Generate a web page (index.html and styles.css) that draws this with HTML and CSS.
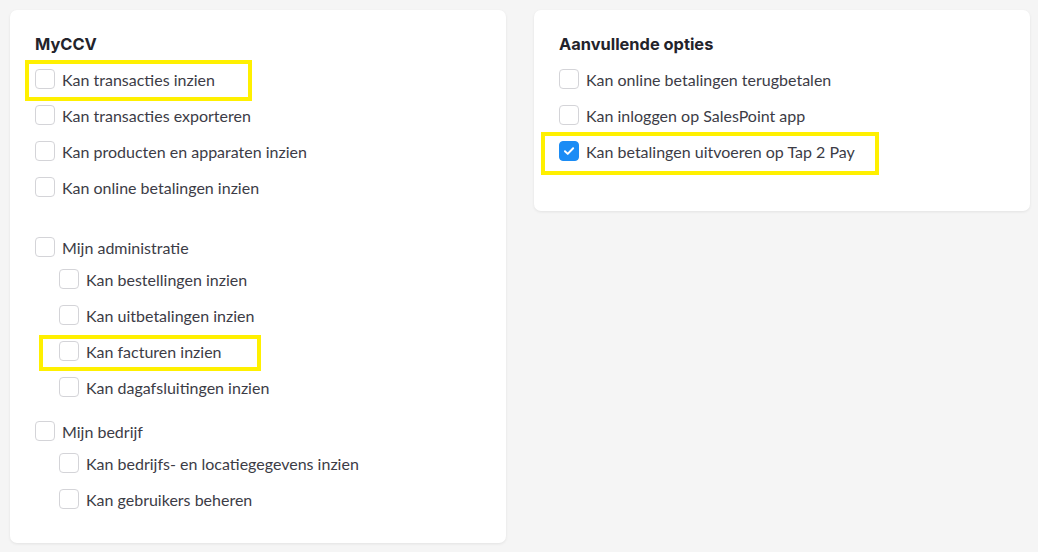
FILE: index.html
```html
<!DOCTYPE html>
<html lang="nl">
<head>
<meta charset="utf-8">
<link rel="stylesheet" href="styles.css">
</head>
<body>
<div class="page">
  <section class="card card-left">
    <h2 class="title">MyCCV</h2>
    <ul class="list">
      <li class="item"><span class="box"></span><span class="label">Kan transacties inzien</span></li>
      <li class="item"><span class="box"></span><span class="label">Kan transacties exporteren</span></li>
      <li class="item"><span class="box"></span><span class="label">Kan producten en apparaten inzien</span></li>
      <li class="item"><span class="box"></span><span class="label">Kan online betalingen inzien</span></li>
    </ul>
    <div class="group group-first">
      <div class="item"><span class="box"></span><span class="label">Mijn administratie</span></div>
      <ul class="list sub">
        <li class="item"><span class="box"></span><span class="label">Kan bestellingen inzien</span></li>
        <li class="item"><span class="box"></span><span class="label">Kan uitbetalingen inzien</span></li>
        <li class="item"><span class="box"></span><span class="label">Kan facturen inzien</span></li>
        <li class="item"><span class="box"></span><span class="label">Kan dagafsluitingen inzien</span></li>
      </ul>
    </div>
    <div class="group">
      <div class="item"><span class="box"></span><span class="label">Mijn bedrijf</span></div>
      <ul class="list sub">
        <li class="item"><span class="box"></span><span class="label">Kan bedrijfs- en locatiegegevens inzien</span></li>
        <li class="item"><span class="box"></span><span class="label">Kan gebruikers beheren</span></li>
      </ul>
    </div>
    <div class="mark mark-1"></div>
    <div class="mark mark-2"></div>
  </section>
  <section class="card card-right">
    <h2 class="title">Aanvullende opties</h2>
    <ul class="list">
      <li class="item"><span class="box"></span><span class="label">Kan online betalingen terugbetalen</span></li>
      <li class="item"><span class="box"></span><span class="label">Kan inloggen op SalesPoint app</span></li>
      <li class="item"><span class="box checked"><svg viewBox="0 0 20 20" width="20" height="20"><path d="M5.5 10.3 L8.6 13.2 L14.6 6.9" fill="none" stroke="#fff" stroke-width="2.2" stroke-linecap="round" stroke-linejoin="round"/></svg></span><span class="label">Kan betalingen uitvoeren op Tap 2 Pay</span></li>
    </ul>
    <div class="mark mark-3"></div>
  </section>
</div>
</body>
</html>
```
FILE: styles.css
```css
* { box-sizing: border-box; }
html, body { margin: 0; padding: 0; }
body {
  background: #f5f5f5;
  font-family: "Lato", "Liberation Sans", sans-serif;
  color: #3c3c46;
  width: 1038px;
  height: 552px;
  overflow: hidden;
}
.page {
  display: flex;
  align-items: flex-start;
  gap: 28px;
  padding: 10px 8px 0 10px;
}
.card {
  position: relative;
  width: 496px;
  background: #fff;
  border-radius: 7px;
  box-shadow: 0 1px 3px rgba(0,0,0,0.08);
  padding: 24px 25px 0 25px;
}
.card-left { height: 533px; }
.card-right { height: 201px; }
.title {
  margin: 0 0 7px 0;
  font-family: "Inter", "Lato", sans-serif;
  font-weight: 700;
  font-size: 16.4px;
  line-height: 20px;
  color: #23232b;
}
.list { list-style: none; margin: 0; padding: 0; }
.item {
  display: flex;
  align-items: center;
  gap: 7px;
  height: 36px;
  font-size: 16px;
}
.box {
  flex: none;
  width: 20px;
  height: 20px;
  border: 1px solid #d4d4d8;
  border-radius: 4px;
  background: #fff;
  display: flex;
  align-items: center;
  justify-content: center;
}
.box.checked {
  background: #1b8cf5;
  border-color: #1b8cf5;
}
.box.checked svg { display: block; }
.label { white-space: nowrap; }
.group { margin-top: 8px; }
.group-first { margin-top: 24px; }
.sub { padding-left: 24px; margin-top: -4px; }
.mark {
  position: absolute;
  border: 4px solid #fff000;
}
.mark-1 { left: 15px; top: 50px; width: 227px; height: 41px; }
.mark-2 { left: 29px; top: 325px; width: 222px; height: 36px; }
.mark-3 { left: 7px; top: 122px; width: 338px; height: 43px; }
```
